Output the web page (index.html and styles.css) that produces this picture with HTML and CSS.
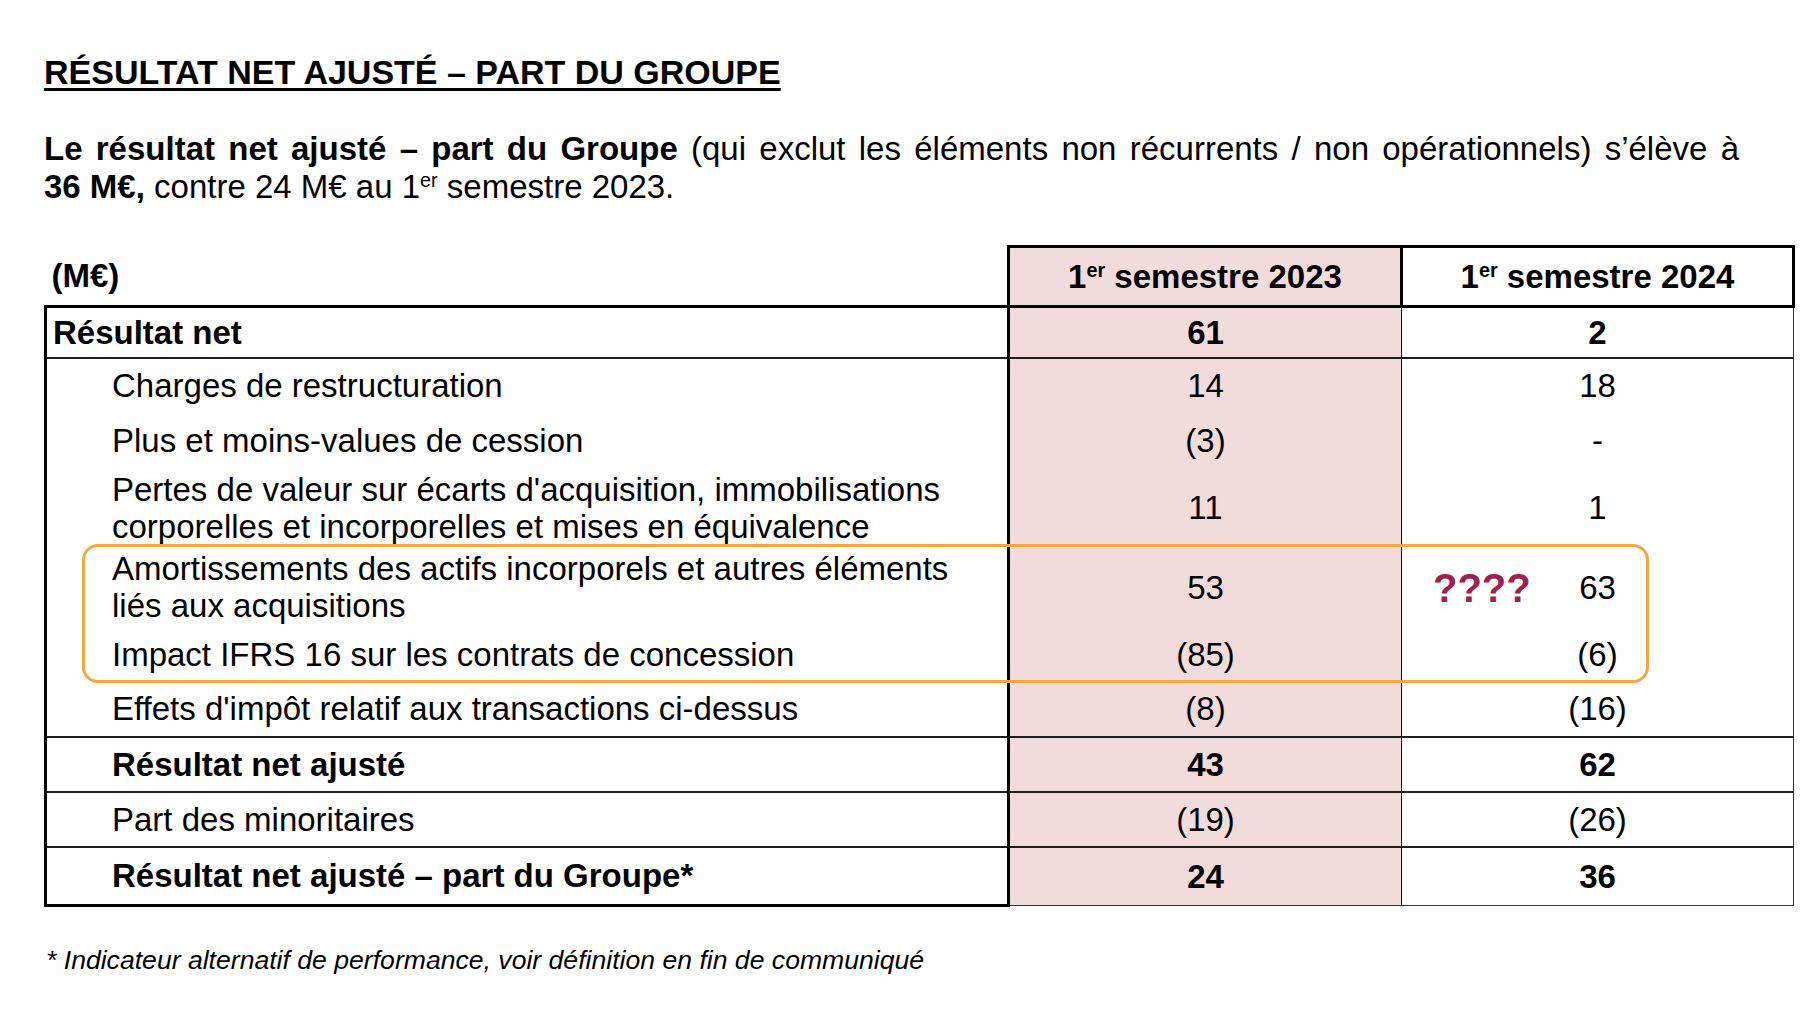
FILE: index.html
```html
<!DOCTYPE html>
<html lang="fr">
<head>
<meta charset="utf-8">
<title>Résultat net ajusté – part du Groupe</title>
<link rel="stylesheet" href="styles.css">
</head>
<body>
<main class="page">
  <h1 class="title">RÉSULTAT NET AJUSTÉ – PART DU GROUPE</h1>
  <p class="lead"><b>Le résultat net ajusté – part du Groupe</b> (qui exclut les éléments non récurrents / non opérationnels) s’élève à <b>36&nbsp;M€,</b> contre 24 M€ au 1<span class="sup">er</span> semestre 2023.</p>

  <div class="table-wrap">
    <table class="results">
      <colgroup>
        <col class="c-label">
        <col class="c-2023">
        <col class="c-2024">
      </colgroup>
      <thead>
        <tr class="r-head">
          <th class="corner label">(M€)</th>
          <th class="hcol y2023">1<span class="sup">er</span> semestre 2023</th>
          <th class="hcol y2024">1<span class="sup">er</span> semestre 2024</th>
        </tr>
      </thead>
      <tbody>
        <tr class="r-51 sep strong">
          <td class="label">Résultat net</td>
          <td class="num y2023">61</td>
          <td class="num y2024">2</td>
        </tr>
        <tr class="r-55">
          <td class="label indent">Charges de restructuration</td>
          <td class="num y2023">14</td>
          <td class="num y2024">18</td>
        </tr>
        <tr class="r-55">
          <td class="label indent">Plus et moins-values de cession</td>
          <td class="num y2023">(3)</td>
          <td class="num y2024">-</td>
        </tr>
        <tr class="r-80">
          <td class="label indent">Pertes de valeur sur écarts d'acquisition, immobilisations<br>corporelles et incorporelles et mises en équivalence</td>
          <td class="num y2023">11</td>
          <td class="num y2024">1</td>
        </tr>
        <tr class="r-79">
          <td class="label indent">Amortissements des actifs incorporels et autres éléments<br>liés aux acquisitions</td>
          <td class="num y2023">53</td>
          <td class="num y2024">63</td>
        </tr>
        <tr class="r-55">
          <td class="label indent">Impact IFRS 16 sur les contrats de concession</td>
          <td class="num y2023">(85)</td>
          <td class="num y2024">(6)</td>
        </tr>
        <tr class="r-55 sep">
          <td class="label indent">Effets d'impôt relatif aux transactions ci-dessus</td>
          <td class="num y2023">(8)</td>
          <td class="num y2024">(16)</td>
        </tr>
        <tr class="r-55 sep strong">
          <td class="label indent">Résultat net ajusté</td>
          <td class="num y2023">43</td>
          <td class="num y2024">62</td>
        </tr>
        <tr class="r-55 sep">
          <td class="label indent">Part des minoritaires</td>
          <td class="num y2023">(19)</td>
          <td class="num y2024">(26)</td>
        </tr>
        <tr class="r-59 last strong">
          <td class="label indent">Résultat net ajusté – part du Groupe*</td>
          <td class="num y2023">24</td>
          <td class="num y2024">36</td>
        </tr>
      </tbody>
    </table>
    <div class="highlight"></div>
    <span class="qmarks">????</span>
  </div>

  <p class="note">* Indicateur alternatif de performance, voir définition en fin de communiqué</p>
</main>
</body>
</html>
```

FILE: styles.css
```css
html, body {
  margin: 0;
  padding: 0;
  background: #ffffff;
}

body {
  font-family: "Liberation Sans", Arial, Helvetica, sans-serif;
  color: #000000;
}

.page {
  padding: 53px 24px 0 44px;
}

.title {
  margin: 0;
  font-size: 34px;
  line-height: 38px;
  font-weight: 700;
  text-decoration: underline;
  text-decoration-thickness: 3px;
  text-underline-offset: 4px;
}

.lead {
  margin: 39px 0 0;
  width: 1695px;
  font-size: 33px;
  line-height: 38px;
  text-align: justify;
}

.lead b {
  font-weight: 700;
}

.sup {
  font-size: 0.6em;
  vertical-align: 0.55em;
  line-height: 0;
}

.table-wrap {
  position: relative;
  width: 1748px;
  margin-top: 39px;
}

.results {
  width: 1748px;
  border-collapse: collapse;
  table-layout: fixed;
  font-size: 33px;
  line-height: 37px;
}

.c-label { width: 963px; }
.c-2023 { width: 393px; }
.c-2024 { width: 392px; }

.results th,
.results td {
  padding: 0;
  vertical-align: middle;
  font-weight: 400;
}

.results th,
.results .strong td {
  font-weight: 700;
}

.results .label {
  text-align: left;
  padding-left: 6px;
}

.results .label.indent {
  padding-left: 65px;
}

.num,
.hcol {
  text-align: center;
}

.y2023 {
  background: #f2dcdb;
}

.y2024 {
  background: #ffffff;
}

/* row heights */
.r-head { height: 60px; }
.r-51 { height: 51px; }
.r-55 { height: 55px; }
.r-59 { height: 59px; }
.r-79 { height: 79px; }
.r-80 { height: 80px; }

.corner {
  border-bottom: 3px solid #000;
  border-right: 3px solid #000;
}

.hcol {
  border: 3px solid #000;
}

/* body borders */
.results tbody td.label {
  border-left: 3px solid #000;
  border-right: 3px solid #000;
}

.results tbody td.y2024 {
  border-left: 1px solid #111;
  border-right: 1px solid #333;
}

.results tr.sep td {
  border-bottom: 2px solid #1e1e1e;
}

.results tr.last td {
  border-bottom: 1px solid #333;
}

.results tr.last td.label {
  border-bottom: 3px solid #000;
}

/* annotations drawn over the table */
.highlight {
  position: absolute;
  left: 38px;
  top: 299px;
  width: 1567px;
  height: 139px;
  box-sizing: border-box;
  border: 3px solid #f6a83c;
  border-radius: 16px;
  pointer-events: none;
}

.qmarks {
  position: absolute;
  left: 1389px;
  top: 323px;
  font-size: 40px;
  line-height: 40px;
  font-weight: 700;
  color: #9d2150;
  letter-spacing: 0;
}

.note {
  margin: 38px 0 0 2px;
  font-size: 26.6px;
  line-height: 30px;
  font-style: italic;
}
```
